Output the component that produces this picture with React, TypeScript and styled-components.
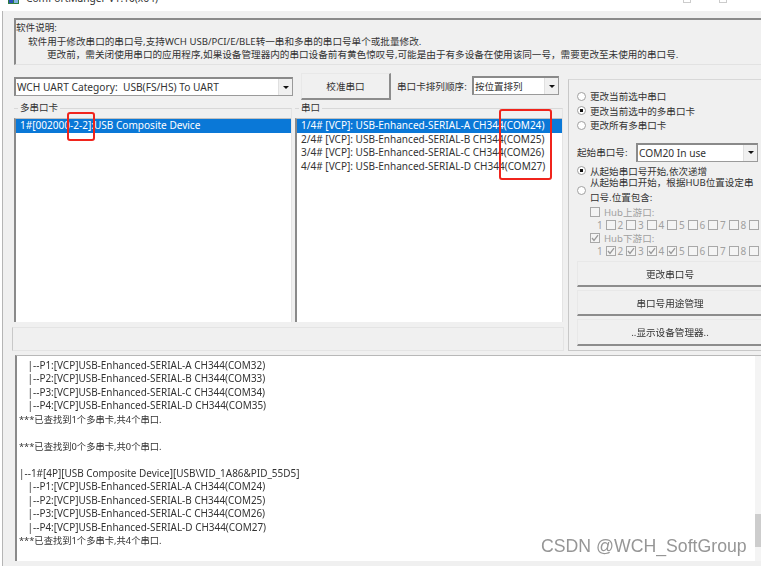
import * as React from 'react';
import styled, { createGlobalStyle } from 'styled-components';

const GlobalStyle = createGlobalStyle`
  html, body { margin: 0; padding: 0; background: #fff; }
  body {
    font-family: "Noto Sans", "Noto Sans CJK SC", sans-serif;
    font-size: 10px;
    color: #222;
  }
`;

const Page = styled.div`
  position: relative;
  width: 761px;
  height: 566px;
  overflow: hidden;
  background: #fff;
`;

const Shot = styled.div`
  width: 761px;
  height: 566px;
  display: flex;
  flex-direction: column;
  filter: blur(0.35px);
`;

const TitleBar = styled.div`
  height: 11px;
  flex: none;
  display: flex;
  align-items: flex-start;
  justify-content: space-between;
  padding: 0 4px 0 8px;
  overflow: hidden;
  background: #fff;
`;

const TitleLeft = styled.div`
  display: flex;
  align-items: flex-end;
  gap: 7px;
  height: 4px;
  font-size: 10.2px;
  line-height: 12px;
  color: #333;
`;

const WinControls = styled.div`
  display: flex;
  gap: 28px;
  height: 3px;
  margin-right: 30px;
`;

const WinBox = styled.span`
  width: 6px;
  height: 2px;
  border: 1px solid #ccc;
  border-top: 0;
`;

const Body = styled.div`
  flex: 1;
  margin-left: 2px;
  border-left: 1px solid #b5b5b5;
  background: #f0f0f0;
  padding: 7px 0 3px 11px;
  display: flex;
  flex-direction: column;
`;

const Notes = styled.div`
  height: 47px;
  box-sizing: border-box;
  padding: 1px 0 0 0;
  border-top: 2px solid #8a8a8a;
  border-left: 2px solid #8a8a8a;
  border-bottom: 1px solid #e2e2e2;
  background: #f0f0f0;
  line-height: 13.5px;
  font-size: 9.6px;
  color: #333;
`;

const NoteLine = styled.div<{ $indent: number }>`
  padding-left: ${(p) => p.$indent}px;
  white-space: nowrap;
`;

const Middle = styled.div`
  display: flex;
  margin-top: 8px;
  height: 278px;
`;

const LeftCol = styled.div`
  width: 549px;
  flex: none;
`;

const TopRow = styled.div`
  height: 29px;
  display: flex;
  align-items: flex-start;
`;

const Combo = styled.div<{ $width: number; $top: number; $cjk?: boolean }>`
  width: ${(p) => p.$width}px;
  height: 19px;
  margin-top: ${(p) => p.$top}px;
  box-sizing: border-box;
  flex: none;
  display: flex;
  align-items: center;
  justify-content: space-between;
  padding-left: 1px;
  background: #fff;
  border: 1px solid #9a9a9a;
  border-top: 2px solid #8a8a8a;
  border-left: 2px solid #8a8a8a;
  white-space: nowrap;
  font-size: ${(p) => (p.$cjk ? 9.5 : 10.2)}px;
  color: #333;
`;

const ComboArrow = styled.span`
  width: 13px;
  height: 100%;
  flex: none;
  display: flex;
  align-items: center;
  justify-content: center;
  background: #f0f0f0;
  border-left: 1px solid #e0e0e0;
  &::after {
    content: '';
    border-top: 3px solid #111;
    border-left: 3px solid transparent;
    border-right: 3px solid transparent;
  }
`;

const RaisedButton = styled.button`
  box-sizing: border-box;
  font: inherit;
  font-size: 9.6px;
  color: #333;
  background: #f0f0f0;
  border: 1px solid #e8e8e8;
  border-right: 2px solid #8c8c8c;
  border-bottom: 2px solid #8c8c8c;
  padding: 0;
`;

const CalibrateButton = styled(RaisedButton)`
  width: 90px;
  height: 27px;
  margin: 0 6px 0 8px;
  flex: none;
`;

const SortLabel = styled.span`
  width: 75px;
  margin-top: 6px;
  flex: none;
  white-space: nowrap;
  font-size: 9.6px;
  color: #333;
`;

const Groups = styled.div`
  display: flex;
  gap: 3px;
  height: 220px;
`;

const Group = styled.fieldset<{ $width: number }>`
  width: ${(p) => p.$width}px;
  box-sizing: border-box;
  margin: 0;
  padding: 0;
  min-width: 0;
  border: 0;
  border-top: 1px solid #d8d8d8;
  border-right: 1px solid #e4e4e4;
  display: flex;
  flex-direction: column;
`;

const GroupTitle = styled.legend`
  margin-left: 4px;
  padding: 0 2px;
  font-size: 9.5px;
  line-height: 12px;
  color: #333;
`;

const ListBox = styled.div`
  flex: 1;
  margin-top: 4px;
  background: #fff;
  border-left: 2px solid #8a8a8a;
  border-top: 1px solid #c0c0c0;
  box-sizing: border-box;
`;

const ListRow = styled.div<{ $selected?: boolean }>`
  height: 13.5px;
  line-height: 13.5px;
  padding-left: 4px;
  white-space: nowrap;
  font-size: 10.05px;
  color: ${(p) => (p.$selected ? '#fff' : '#333')};
  background: ${(p) => (p.$selected ? '#0a78d7' : 'transparent')};
`;

const StatusBar = styled.div`
  height: 24px;
  width: 552px;
  margin: 5px 0 0 -2px;
  border: 1px solid #e4e4e4;
  border-left-color: #c8c8c8;
  box-sizing: border-box;
`;

const OptionsPanel = styled.div`
  width: 193px;
  height: 272px;
  margin: 6px 0 0 5px;
  box-sizing: border-box;
  flex: none;
  padding: 9px 0 0 8px;
  border-top: 1px solid #d8d8d8;
  border-left: 1px solid #c8c8c8;
  border-bottom: 1px solid #c8c8c8;
  display: flex;
  flex-direction: column;
`;

const OptionRow = styled.label`
  display: flex;
  align-items: center;
  gap: 3px;
  height: 14.5px;
  white-space: nowrap;
  font-size: 9.55px;
  color: #333;
`;

const Radio = styled.span<{ $checked?: boolean }>`
  width: 7px;
  height: 7px;
  flex: none;
  margin-right: 1px;
  border-radius: 50%;
  border: 1px solid #a0a0a0;
  background: ${(p) => (p.$checked ? 'radial-gradient(circle, #111 0 1.5px, #fff 2px)' : '#fff')};
`;

const StartRow = styled.div`
  display: flex;
  align-items: center;
  margin: 10px 0 2px;
  height: 19px;
  font-size: 9.6px;
  color: #333;
`;

const StartLabel = styled.span`
  width: 59px;
  flex: none;
  white-space: nowrap;
`;

const WrapOption = styled.label`
  display: flex;
  align-items: center;
  gap: 3px;
  width: 180px;
  margin-top: -3px;
  line-height: 15px;
  font-size: 9.55px;
  color: #333;
`;

const HubTitle = styled.div`
  display: flex;
  align-items: center;
  gap: 4px;
  height: 13px;
  margin-left: 13px;
  font-size: 9.6px;
  color: #a0a0a0;
`;

const Check = styled.span<{ $checked?: boolean }>`
  width: 8px;
  height: 8px;
  flex: none;
  border: 1px solid #a8a8a8;
  background: #f4f4f4;
  display: inline-flex;
  align-items: center;
  justify-content: center;
  svg { display: ${(p) => (p.$checked ? 'block' : 'none')}; }
`;

const PortRow = styled.div`
  display: flex;
  height: 13px;
  margin-left: 20px;
  overflow: hidden;
`;

const Port = styled.span`
  width: 20.5px;
  flex: none;
  display: flex;
  align-items: center;
  gap: 3px;
  font-size: 10px;
  color: #a0a0a0;
`;

const ActionButton = styled(RaisedButton)<{ $h: number }>`
  width: 185px;
  height: ${(p) => p.$h}px;
  flex: none;
  border-right: 0;
`;

const ActionStack = styled.div`
  display: flex;
  flex-direction: column;
  gap: 3px;
  margin-top: 4px;
`;

const LogWrap = styled.div`
  margin: 4px 0 0 1px;
  height: 206px;
  display: flex;
  background: #fff;
  border-left: 2px solid #8a8a8a;
  border-top: 1px solid #b8b8b8;
  box-sizing: border-box;
`;

const LogText = styled.div`
  flex: 1;
  padding: 2.5px 0 0 2px;
  line-height: 13.5px;
  font-size: 9.95px;
  color: #333;
  overflow: hidden;
`;

const LogLine = styled.div<{ $nested?: boolean; $cjk?: boolean }>`
  height: 13.5px;
  white-space: nowrap;
  padding-left: ${(p) => (p.$nested ? 8.5 : 0)}px;
  font-size: ${(p) => (p.$cjk ? 9.3 : 9.95)}px;
`;

const ScrollTrack = styled.div`
  width: 6px;
  flex: none;
  background: #f4f4f4;
  padding-top: 158px;
  box-sizing: border-box;
`;

const ScrollThumb = styled.div`
  height: 33px;
  background: #cdcdcd;
`;

const RedMark = styled.div<{ $left: number; $top: number; $w: number; $h: number }>`
  position: absolute;
  left: ${(p) => p.$left}px;
  top: ${(p) => p.$top}px;
  width: ${(p) => p.$w}px;
  height: ${(p) => p.$h}px;
  box-sizing: border-box;
  border: 2px solid #f0241c;
  border-radius: 3px;
`;

const Watermark = styled.div`
  position: absolute;
  left: 541px;
  top: 536px;
  font-family: "Liberation Sans", "Noto Sans", sans-serif;
  font-size: 17.7px;
  line-height: 21px;
  color: #969696;
  white-space: nowrap;
`;

const CheckMark = () => (
  <svg width="8" height="8" viewBox="0 0 8 8">
    <path d="M1 4l2 2.4L7 1.2" fill="none" stroke="#999" strokeWidth="1.3" />
  </svg>
);

const AppIcon = () => (
  <svg width="11" height="4" viewBox="0 7 11 4">
    <rect x="0" y="7" width="11" height="4" fill="#2f7f3f" />
    <rect x="1" y="7" width="4" height="3" fill="#2b4fb8" />
    <rect x="6" y="7" width="4" height="3" fill="#7fb2e0" />
  </svg>
);

const ports = ['A', 'B', 'C', 'D'];

const PortGrid = ({ checked }: { checked: number[] }) => (
  <PortRow>
    {[1, 2, 3, 4, 5, 6, 7, 8].map((n) => (
      <Port key={n}>
        {n}
        <Check $checked={checked.includes(n + 1)}>
          <CheckMark />
        </Check>
      </Port>
    ))}
  </PortRow>
);

const Ports = ({ base }: { base: number }) => (
  <>
    {ports.map((p, i) => (
      <LogLine $nested key={p}>
        |--P{i + 1}:[VCP]USB-Enhanced-SERIAL-{p} CH344(COM{base + i})
      </LogLine>
    ))}
  </>
);

export default function App() {
  return (
    <Page>
      <GlobalStyle />
      <Shot>
        <TitleBar>
          <TitleLeft>
            <AppIcon />
            <span>ComPortManger V1.10(x64)</span>
          </TitleLeft>
          <WinControls>
            <WinBox />
            <WinBox />
          </WinControls>
        </TitleBar>
        <Body>
          <Notes>
            <NoteLine $indent={0}>软件说明:</NoteLine>
            <NoteLine $indent={12}>
              软件用于修改串口的串口号,支持WCH USB/PCI/E/BLE转一串和多串的串口号单个或批量修改.
            </NoteLine>
            <NoteLine $indent={31}>
              更改前，需关闭使用串口的应用程序,如果设备管理器内的串口设备前有黄色惊叹号,可能是由于有多设备在使用该同一号，需要更改至未使用的串口号.
            </NoteLine>
          </Notes>
          <Middle>
            <LeftCol>
              <TopRow>
                <Combo $width={279} $top={4}>
                  WCH UART Category:&nbsp; USB(FS/HS) To UART
                  <ComboArrow />
                </Combo>
                <CalibrateButton>校准串口</CalibrateButton>
                <SortLabel>串口卡排列顺序:</SortLabel>
                <Combo $width={87} $top={3} $cjk>
                  按位置排列
                  <ComboArrow />
                </Combo>
              </TopRow>
              <Groups>
                <Group $width={278}>
                  <GroupTitle>多串口卡</GroupTitle>
                  <ListBox>
                    <ListRow $selected>1#[002000-2-2]:USB Composite Device</ListRow>
                  </ListBox>
                </Group>
                <Group $width={268}>
                  <GroupTitle>串口</GroupTitle>
                  <ListBox>
                    {ports.map((p, i) => (
                      <ListRow $selected={i === 0} key={p}>
                        {i + 1}/4# [VCP]: USB-Enhanced-SERIAL-{p} CH344(COM{24 + i})
                      </ListRow>
                    ))}
                  </ListBox>
                </Group>
              </Groups>
              <StatusBar />
            </LeftCol>
            <OptionsPanel>
              <OptionRow>
                <Radio />
                更改当前选中串口
              </OptionRow>
              <OptionRow>
                <Radio $checked />
                更改当前选中的多串口卡
              </OptionRow>
              <OptionRow>
                <Radio />
                更改所有多串口卡
              </OptionRow>
              <StartRow>
                <StartLabel>起始串口号:</StartLabel>
                <Combo $width={122} $top={0}>
                  COM20 In use
                  <ComboArrow />
                </Combo>
              </StartRow>
              <OptionRow>
                <Radio $checked />
                从起始串口号开始,依次递增
              </OptionRow>
              <WrapOption>
                <Radio />
                <span>从起始串口开始，根据HUB位置设定串口号.位置包含:</span>
              </WrapOption>
              <HubTitle>
                <Check />
                Hub上游口:
              </HubTitle>
              <PortGrid checked={[]} />
              <HubTitle>
                <Check $checked>
                  <CheckMark />
                </Check>
                Hub下游口:
              </HubTitle>
              <PortGrid checked={[2, 3, 4, 5]} />
              <ActionStack>
                <ActionButton $h={26}>更改串口号</ActionButton>
                <ActionButton $h={26}>串口号用途管理</ActionButton>
                <ActionButton $h={27}>..显示设备管理器..</ActionButton>
              </ActionStack>
            </OptionsPanel>
          </Middle>
          <LogWrap>
            <LogText>
              <Ports base={32} />
              <LogLine $cjk>***已查找到1个多串卡,共4个串口.</LogLine>
              <LogLine />
              <LogLine $cjk>***已查找到0个多串卡,共0个串口.</LogLine>
              <LogLine />
              <LogLine>|--1#[4P][USB Composite Device][USB\VID_1A86&amp;PID_55D5]</LogLine>
              <Ports base={24} />
              <LogLine $cjk>***已查找到1个多串卡,共4个串口.</LogLine>
            </LogText>
            <ScrollTrack>
              <ScrollThumb />
            </ScrollTrack>
          </LogWrap>
        </Body>
      </Shot>
      <RedMark $left={67} $top={112} $w={28} $h={29} />
      <RedMark $left={499} $top={109} $w={53} $h={71} />
      <Watermark>CSDN @WCH_SoftGroup</Watermark>
    </Page>
  );
}
